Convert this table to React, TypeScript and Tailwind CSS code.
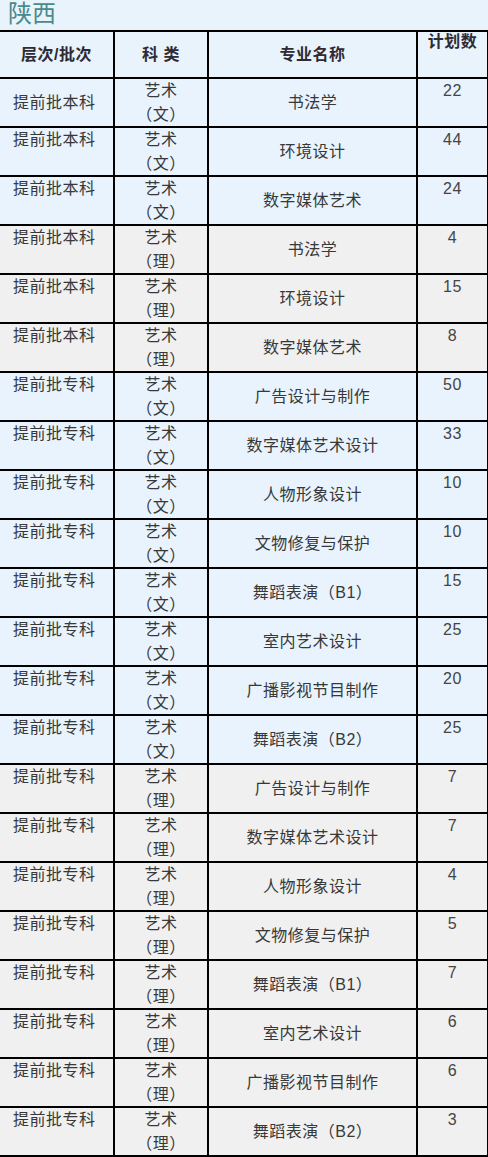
const rows: [string, string, string, number][] = [
  ["提前批本科", "文", "书法学", 22],
  ["提前批本科", "文", "环境设计", 44],
  ["提前批本科", "文", "数字媒体艺术", 24],
  ["提前批本科", "理", "书法学", 4],
  ["提前批本科", "理", "环境设计", 15],
  ["提前批本科", "理", "数字媒体艺术", 8],
  ["提前批专科", "文", "广告设计与制作", 50],
  ["提前批专科", "文", "数字媒体艺术设计", 33],
  ["提前批专科", "文", "人物形象设计", 10],
  ["提前批专科", "文", "文物修复与保护", 10],
  ["提前批专科", "文", "舞蹈表演（B1）", 15],
  ["提前批专科", "文", "室内艺术设计", 25],
  ["提前批专科", "文", "广播影视节目制作", 20],
  ["提前批专科", "文", "舞蹈表演（B2）", 25],
  ["提前批专科", "理", "广告设计与制作", 7],
  ["提前批专科", "理", "数字媒体艺术设计", 7],
  ["提前批专科", "理", "人物形象设计", 4],
  ["提前批专科", "理", "文物修复与保护", 5],
  ["提前批专科", "理", "舞蹈表演（B1）", 7],
  ["提前批专科", "理", "室内艺术设计", 6],
  ["提前批专科", "理", "广播影视节目制作", 6],
  ["提前批专科", "理", "舞蹈表演（B2）", 3],
];

const cell = "border-2 border-black p-0";

export default function App() {
  return (
    <div className="w-[488px] bg-[#e8f3fc] text-[#383838] font-['Liberation_Sans','Noto_Sans_CJK_SC',sans-serif]">
      <h1 className="h-[30px] pl-2 text-[24px] leading-[28px] text-[#4b8a8a] font-normal">陕西</h1>
      <table className="table-fixed border-collapse w-[488px] text-[16px] tracking-[0.5px]">
        <colgroup>
          <col className="w-[114px]" />
          <col className="w-[94px]" />
          <col className="w-[209px]" />
          <col className="w-[71px]" />
        </colgroup>
        <thead>
          <tr className="h-[47px] bg-[#e8f3fc] font-bold text-[#2f2a33]">
            <th className={`${cell} border-l-0 text-center align-middle`}>层次/批次</th>
            <th className={`${cell} text-center align-middle`}>科 类</th>
            <th className={`${cell} text-center align-middle`}>专业名称</th>
            <th className={`${cell} text-center align-top leading-[20px]`}>计划数</th>
          </tr>
        </thead>
        <tbody>
          {rows.map(([level, kind, name, num], i) => (
            <tr
              key={i}
              className={`h-[47px] leading-[23.5px] ${kind === "文" ? "bg-[#e8f3fd]" : "bg-[#f0f0f0]"}`}
            >
              <td className={`${cell} border-l-0 pl-[13px] ${i === 0 ? "align-middle" : "align-top"}`}>{level}</td>
              <td className={`${cell} text-center align-top`}>
                <div>艺术</div>
                <div>（{kind}）</div>
              </td>
              <td className={`${cell} text-center align-middle`}>{name}</td>
              <td className={`${cell} text-center align-top text-[#444]`}>{num}</td>
            </tr>
          ))}
        </tbody>
      </table>
    </div>
  );
}
